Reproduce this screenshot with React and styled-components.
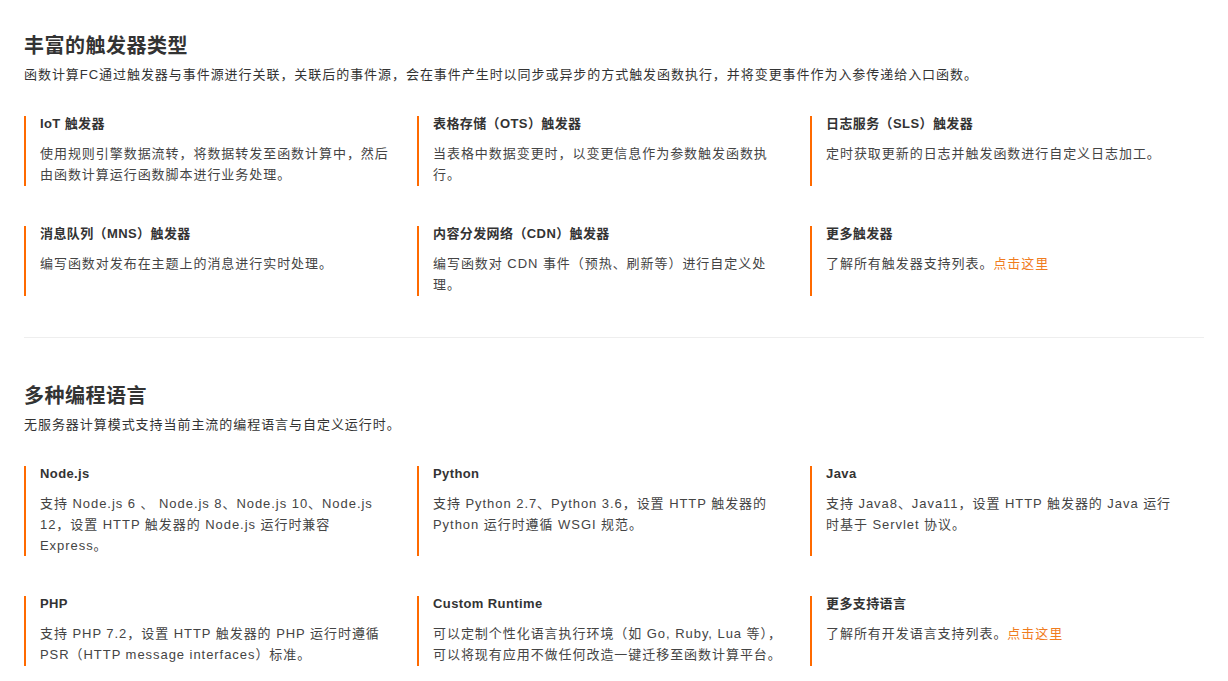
import React from "react";
import styled, { createGlobalStyle } from "styled-components";

const Global = createGlobalStyle`
  body { margin: 0; background: #fff; font-family: "Liberation Sans", Arial, "Noto Sans CJK SC", sans-serif; color: #333; }
`;

const Page = styled.div`
  padding: 0 24px;
`;

const Section = styled.section`
  padding-top: ${p => p.$top}px;
  padding-bottom: 41px;
  border-bottom: ${p => (p.$last ? "none" : "1px solid #eeeeee")};
`;

const Title = styled.h2`
  margin: 0;
  font-size: 20px;
  line-height: 28px;
  font-weight: bold;
  color: #333;
  letter-spacing: 0.5px;
`;

const Desc = styled.p`
  margin: 5px 0 31px;
  font-size: 13px;
  line-height: 20px;
  color: #333;
  letter-spacing: 0.95px;
`;

const Grid = styled.div`
  display: grid;
  grid-template-columns: repeat(3, 393px);
  row-gap: 40px;
`;

const Card = styled.div`
  border-left: 2px solid #ff6a00;
  padding-left: 14px;
  min-height: 70px;
  box-sizing: border-box;
`;

const CardTitle = styled.div`
  font-size: 13px;
  line-height: 16px;
  font-weight: bold;
  color: #333;
  letter-spacing: 0.4px;
`;

const CardText = styled.div`
  margin-top: 11px;
  width: 352px;
  font-size: 13px;
  line-height: 21px;
  color: #444;
  letter-spacing: 0.95px;
`;

const More = styled.a`
  color: #f07c1e;
  text-decoration: none;
`;

const sections = [
  {
    title: "丰富的触发器类型",
    desc: "函数计算FC通过触发器与事件源进行关联，关联后的事件源，会在事件产生时以同步或异步的方式触发函数执行，并将变更事件作为入参传递给入口函数。",
    items: [
      ["IoT 触发器", "使用规则引擎数据流转，将数据转发至函数计算中，然后由函数计算运行函数脚本进行业务处理。"],
      ["表格存储（OTS）触发器", "当表格中数据变更时，以变更信息作为参数触发函数执行。"],
      ["日志服务（SLS）触发器", "定时获取更新的日志并触发函数进行自定义日志加工。"],
      ["消息队列（MNS）触发器", "编写函数对发布在主题上的消息进行实时处理。"],
      ["内容分发网络（CDN）触发器", "编写函数对 CDN 事件（预热、刷新等）进行自定义处理。"],
      ["更多触发器", "了解所有触发器支持列表。", true],
    ],
  },
  {
    title: "多种编程语言",
    desc: "无服务器计算模式支持当前主流的编程语言与自定义运行时。",
    items: [
      ["Node.js", "支持 Node.js 6 、 Node.js 8、Node.js 10、Node.js 12，设置 HTTP 触发器的 Node.js 运行时兼容 Express。"],
      ["Python", "支持 Python 2.7、Python 3.6，设置 HTTP 触发器的 Python 运行时遵循 WSGI 规范。"],
      ["Java", "支持 Java8、Java11，设置 HTTP 触发器的 Java 运行时基于 Servlet 协议。"],
      ["PHP", "支持 PHP 7.2，设置 HTTP 触发器的 PHP 运行时遵循 PSR（HTTP message interfaces）标准。"],
      ["Custom Runtime", "可以定制个性化语言执行环境（如 Go, Ruby, Lua 等），可以将现有应用不做任何改造一键迁移至函数计算平台。"],
      ["更多支持语言", "了解所有开发语言支持列表。", true],
    ],
  },
];

export default function App() {
  return (
    <Page>
      <Global />
      {sections.map((s, i) => (
        <Section key={s.title} $top={i === 0 ? 32 : 44} $last={i === 1}>
          <Title>{s.title}</Title>
          <Desc>{s.desc}</Desc>
          <Grid>
            {s.items.map(([t, d, more]) => (
              <Card key={t}>
                <CardTitle>{t}</CardTitle>
                <CardText>
                  {d}
                  {more && <More href="#">点击这里</More>}
                </CardText>
              </Card>
            ))}
          </Grid>
        </Section>
      ))}
    </Page>
  );
}
